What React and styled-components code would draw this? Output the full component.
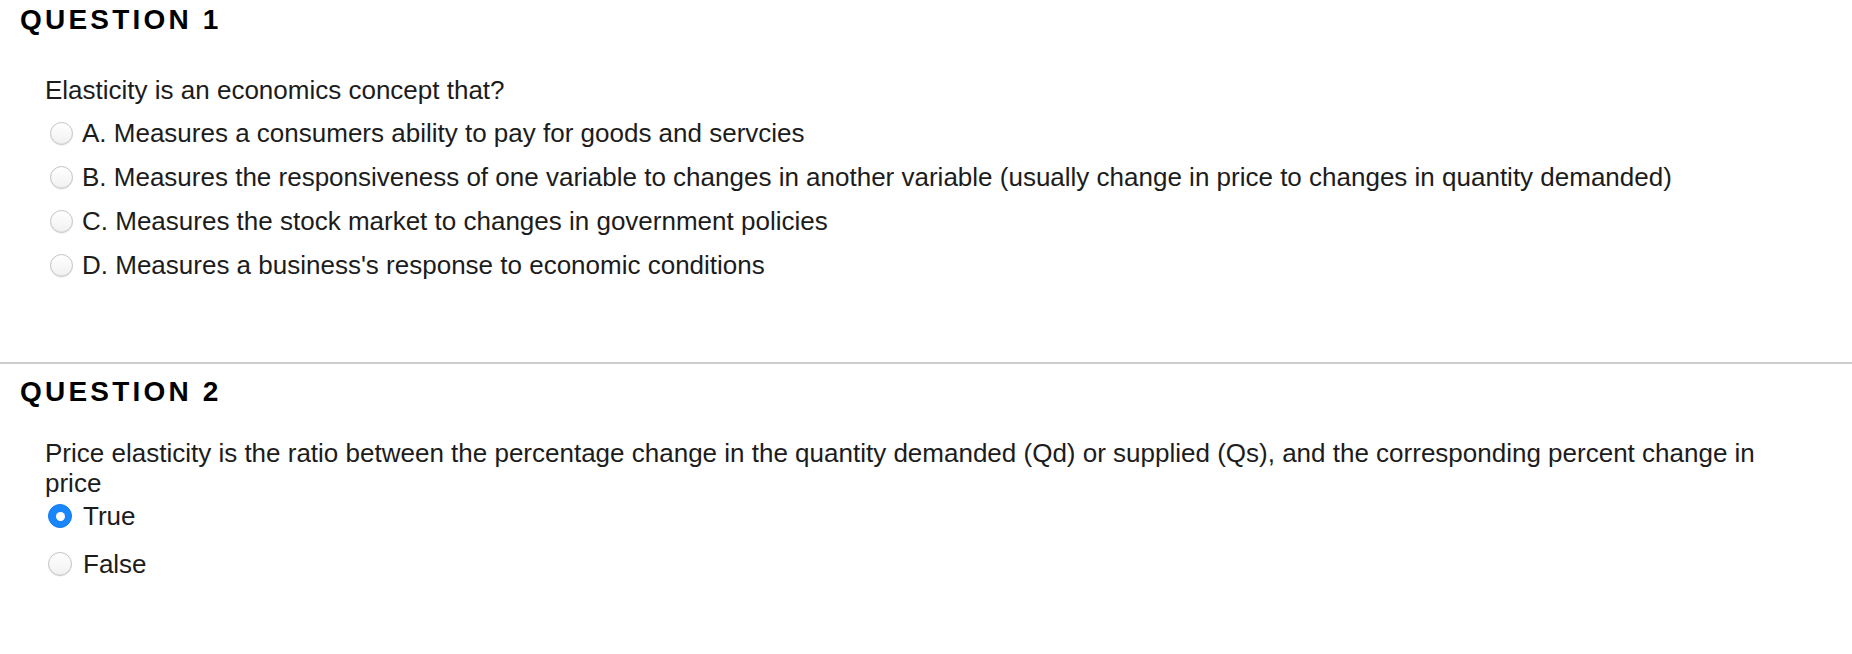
import React from "react";
import styled, { createGlobalStyle } from "styled-components";

const GlobalStyle = createGlobalStyle`
  html, body {
    margin: 0;
    padding: 0;
    background: #ffffff;
  }
  body {
    font-family: "Liberation Sans", Arial, Helvetica, sans-serif;
    color: #1c1c1c;
  }
`;

const Page = styled.div`
  width: 1852px;
  height: 654px;
  overflow: hidden;
  background: #ffffff;
`;

const Section = styled.section`
  padding: ${(p) => p.$pt}px 67px 0 20px;
  height: ${(p) => p.$h}px;
  box-sizing: border-box;
  border-bottom: ${(p) => (p.$divider ? "2px solid #cccccc" : "none")};
`;

const Title = styled.h2`
  margin: 0;
  font-size: 28px;
  line-height: 34px;
  font-weight: bold;
  letter-spacing: 3.2px;
  color: #000000;
`;

const Prompt = styled.p`
  margin: ${(p) => p.$mt}px 0 0 25px;
  font-size: 26px;
  line-height: 30px;
`;

const Options = styled.div`
  display: flex;
  flex-direction: column;
  margin: ${(p) => p.$mt}px 0 0 0;
`;

const Row = styled.label`
  display: flex;
  align-items: center;
  box-sizing: border-box;
  height: ${(p) => p.$h}px;
  padding: ${(p) => p.$pt}px 0 ${(p) => p.$h - p.$pt - 30}px ${(p) => p.$indent}px;
  font-size: 26px;
  line-height: 30px;
  gap: ${(p) => p.$gap}px;
`;

const Radio = styled.span`
  flex: none;
  width: ${(p) => p.$size}px;
  height: ${(p) => p.$size}px;
  border-radius: 50%;
  box-sizing: border-box;
  position: relative;
  ${(p) =>
    p.$checked
      ? `
    background: #1a86fb;
    border: 1px solid #1479ee;
    &::after {
      content: "";
      position: absolute;
      left: 50%;
      top: 50%;
      width: 9px;
      height: 9px;
      margin: -4.5px 0 0 -4.5px;
      border-radius: 50%;
      background: #ffffff;
    }
  `
      : `
    background: linear-gradient(#ffffff, #f1f1f1);
    border: 1px solid #c4c4c4;
    box-shadow: inset 0 -1px 1px rgba(0, 0, 0, 0.05), 0 0.5px 0.5px rgba(0,0,0,0.08);
  `}
`;

const Label = styled.span`
  white-space: nowrap;
`;

const q1Options = [
  "A. Measures a consumers ability to pay for goods and servcies",
  "B. Measures the responsiveness of one variable to changes in another variable (usually change in price to changes in quantity demanded)",
  "C. Measures the stock market to changes in government policies",
  "D. Measures a business's response to economic conditions",
];

const q2Options = [
  { text: "True", checked: true },
  { text: "False", checked: false },
];

export default function App() {
  return (
    <Page>
      <GlobalStyle />
      <Section $pt={3} $h={364} $divider>
        <Title>QUESTION 1</Title>
        <Prompt $mt={38}>Elasticity is an economics concept that?</Prompt>
        <Options $mt={6}>
          {q1Options.map((o) => (
            <Row key={o} $h={44} $pt={7} $indent={30} $gap={9}>
              <Radio $size={23} />
              <Label>{o}</Label>
            </Row>
          ))}
        </Options>
      </Section>
      <Section $pt={11} $h={290}>
        <Title>QUESTION 2</Title>
        <Prompt $mt={29}>
          Price elasticity is the ratio between the percentage change in the
          quantity demanded (Qd) or supplied (Qs), and the corresponding percent
          change in price
        </Prompt>
        <Options $mt={0}>
          {q2Options.map((o) => (
            <Row key={o.text} $h={48} $pt={3} $indent={28} $gap={11}>
              <Radio $size={24} $checked={o.checked} />
              <Label>{o.text}</Label>
            </Row>
          ))}
        </Options>
      </Section>
    </Page>
  );
}
